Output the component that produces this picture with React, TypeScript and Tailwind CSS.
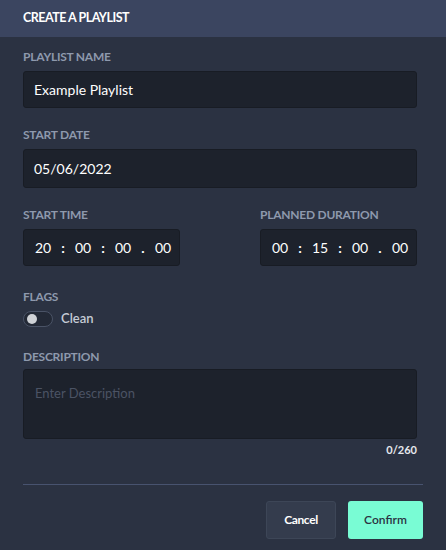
import React from 'react'

const FONT = { fontFamily: 'Lato, "Open Sans", sans-serif' }

function Label({ children }: { children: React.ReactNode }) {
  return (
    <p className="text-[12px] font-bold uppercase leading-none tracking-[-0.02em] text-[#8e99ad]">{children}</p>
  )
}

function TimeBox({ parts, className }: { parts: string[]; className?: string }) {
  const seps = [':', ':', '.']
  return (
    <div
      className={`mt-[8px] flex h-[37px] items-center rounded-[3px] border border-[#181c24] bg-[#1d222c] pl-[11px] text-[14px] text-white ${className ?? ''}`}
    >
      {parts.map((p, i) => (
        <React.Fragment key={i}>
          <span className="w-[16px] text-center">{p}</span>
          {i < 3 && <span className="w-[24px] text-center font-bold">{seps[i]}</span>}
        </React.Fragment>
      ))}
    </div>
  )
}

export default function App() {
  return (
    <div className="h-[550px] w-[446px] overflow-hidden bg-[#2b3242]" style={FONT}>
      <div className="flex h-[37px] items-center bg-[#3b4560] px-[23px]">
        <h1 className="text-[12.5px] font-bold uppercase tracking-[-0.04em] text-white">Create a Playlist</h1>
      </div>

      <div className="px-[23px] pt-[14px]">
        <Label>Playlist Name</Label>
        <div className="mr-[6px] mt-[8px] flex h-[37px] items-center rounded-[3px] border border-[#181c24] bg-[#1d222c] px-[10px] text-[14px] text-white">
          Example Playlist
        </div>

        <div className="mt-[21px]">
          <Label>Start Date</Label>
          <div className="mr-[6px] mt-[8px] flex h-[39px] items-center rounded-[3px] border border-[#181c24] bg-[#1d222c] px-[10px] text-[14px] text-white">
            05/06/2022
          </div>
        </div>

        <div className="mr-[6px] mt-[21px] flex justify-between">
          <div className="w-[157px]">
            <Label>Start Time</Label>
            <TimeBox parts={['20', '00', '00', '00']} />
          </div>
          <div className="w-[157px]">
            <Label>Planned Duration</Label>
            <TimeBox parts={['00', '15', '00', '00']} />
          </div>
        </div>

        <div className="mt-[25px]">
          <Label>Flags</Label>
          <div className="mt-[6px] flex items-center gap-[8px]">
            <div className="flex h-[16px] w-[30px] items-center rounded-full border border-[#4a5366] bg-[#232936] px-[3px]">
              <div className="h-[10px] w-[10px] rounded-full bg-[#cfd2d6]" />
            </div>
            <span className="text-[13px] font-semibold text-[#c5cbd5]">Clean</span>
          </div>
        </div>

        <div className="mt-[22px]">
          <Label>Description</Label>
          <div className="mr-[6px] mt-[6px] h-[70px] rounded-[3px] border border-[#181c24] bg-[#1d222c] px-[11px] pt-[14px] text-[13px] text-[#4b5364]">
            Enter Description
          </div>
          <p className="mr-[6px] mt-[3px] text-right text-[11px] font-bold text-[#e6e9ee]">0/260</p>
        </div>

        <div className="mt-[26px] h-px bg-[#48536f]" />

        <div className="mt-[16px] flex justify-end gap-[12px]">
          <button className="h-[38px] w-[70px] rounded-[3px] border border-[#3d4657] bg-[#343c4d] text-[12px] font-bold tracking-[-0.03em] text-white">
            Cancel
          </button>
          <button className="h-[38px] w-[75px] rounded-[3px] bg-[#79fcd4] text-[12px] font-semibold text-[#2b3242]">
            Confirm
          </button>
        </div>
      </div>
    </div>
  )
}
